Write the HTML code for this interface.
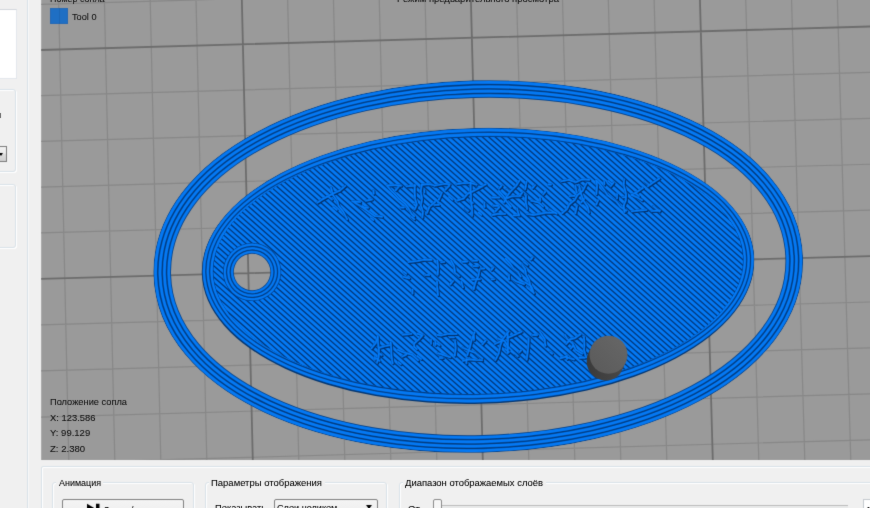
<!DOCTYPE html><html><head><meta charset="utf-8"><title>Preview</title><style>
html,body{margin:0;padding:0}
body{width:870px;height:508px;overflow:hidden;background:#f0f0f0;position:relative;font-family:"Liberation Sans",sans-serif;font-size:9.4px;color:#111}
.t{position:absolute;white-space:nowrap;line-height:1;}
.gb{position:absolute;border:1px solid #d9e2e8;border-radius:3px;box-shadow:inset 1px 1px 0 #fff, 1px 1px 0 #fff;box-sizing:border-box}
.s{display:inline-block;font-size:20px;-webkit-text-stroke:0.15px currentColor;line-height:normal;transform-origin:0 0;white-space:nowrap}
.lbl{position:absolute;background:#f0f0f0;white-space:nowrap;line-height:1;padding:0 2px}
</style></head><body>
<svg width="0" height="0" style="position:absolute"><defs><filter id="soft" x="0" y="0" width="100%" height="100%" filterUnits="objectBoundingBox" color-interpolation-filters="sRGB"><feConvolveMatrix order="3" kernelMatrix="0.1 0.55 0.1 0.55 4 0.55 0.1 0.55 0.1" edgeMode="duplicate" preserveAlpha="true"/></filter><filter id="soft2" x="0" y="0" width="100%" height="100%" filterUnits="objectBoundingBox" color-interpolation-filters="sRGB"><feConvolveMatrix order="3" kernelMatrix="0.03 0.3 0.03 0.3 4 0.3 0.03 0.3 0.03" edgeMode="duplicate" preserveAlpha="false"/></filter></defs></svg>
<div id="page" style="position:absolute;left:0;top:0;width:870px;height:508px;overflow:hidden;background:#f0f0f0;filter:url(#soft)">
<svg width="870" height="508" viewBox="0 0 870 508" style="position:absolute;left:0;top:0">
<defs>
<clipPath id="vp"><rect x="41.2" y="0" width="828.8" height="460.0"/></clipPath>
<clipPath id="inner"><ellipse cx="478.20" cy="265.45" rx="264.80" ry="128.30"/></clipPath>
<mask id="skirt" maskUnits="userSpaceOnUse" x="0" y="0" width="870" height="508">
<ellipse cx="478.20" cy="265.45" rx="276.20" ry="137.50" fill="none" stroke="#fff" stroke-width="97.40" />
<ellipse cx="478.20" cy="265.45" rx="276.20" ry="137.50" fill="#000" stroke="#000" stroke-width="62.20"/>
</mask>
<mask id="side" maskUnits="userSpaceOnUse" x="0" y="0" width="870" height="508"><rect width="870" height="508" fill="#fff"/><circle cx="252.00" cy="266.05" r="19.30" fill="#000"/></mask>
<mask id="body" maskUnits="userSpaceOnUse" x="0" y="0" width="870" height="508">
<ellipse cx="478.20" cy="265.45" rx="276.20" ry="137.50" fill="#fff"/>
<circle cx="252.00" cy="266.05" r="18.30" fill="#000"/>
</mask>
</defs>
<rect x="41.2" y="0" width="828.8" height="460.0" fill="#9a9a9a"/>
<g clip-path="url(#vp)">
<path d="M58.60 0L68.80 460.00M104.41 0L114.80 460.00M150.22 0L160.80 460.00M196.03 0L206.80 460.00M287.65 0L298.80 460.00M333.46 0L344.80 460.00M379.27 0L390.80 460.00M425.08 0L436.80 460.00M516.70 0L528.80 460.00M562.51 0L574.80 460.00M608.32 0L620.80 460.00M654.13 0L666.80 460.00M745.75 0L758.80 460.00M791.56 0L804.80 460.00M837.37 0L850.80 460.00M883.18 0L896.80 460.00M41.00 -41.06 L870 -65.34M41.00 4.43 L870 -19.42M41.00 95.63 L870 72.42M41.00 141.34 L870 118.34M41.00 187.12 L870 164.26M41.00 232.96 L870 210.18M41.00 324.86 L870 302.02M41.00 370.91 L870 347.94M41.00 417.04 L870 393.86M41.00 463.24 L870 439.78" stroke="#878787" stroke-width="1.2" fill="none"/>
<path d="M12.79 0L22.80 460.00M241.84 0L252.80 460.00M470.89 0L482.80 460.00M699.94 0L712.80 460.00M41.00 50.00 L870 26.50M41.00 278.88 L870 256.10M41.00 509.50 L870 485.70" stroke="#6c6c6c" stroke-width="1.8" fill="none"/>
<g transform="rotate(-1.50 478.20 265.45)">
<g mask="url(#skirt)" transform="translate(0 1.05)">
<ellipse cx="478.20" cy="265.45" rx="276.20" ry="137.50" fill="none" stroke="#033a7c" stroke-width="97.40" />
<ellipse cx="478.20" cy="265.45" rx="276.20" ry="137.50" fill="none" stroke="#0455b0" stroke-width="96.50" />
<ellipse cx="478.20" cy="265.45" rx="276.20" ry="137.50" fill="none" stroke="#0479f4" stroke-width="95.60" />
<ellipse cx="478.20" cy="265.45" rx="276.20" ry="137.50" fill="none" stroke="#0455b0" stroke-width="90.40" />
<ellipse cx="478.20" cy="265.45" rx="276.20" ry="137.50" fill="none" stroke="#033a7c" stroke-width="89.50" />
<ellipse cx="478.20" cy="265.45" rx="276.20" ry="137.50" fill="none" stroke="#033a7c" stroke-width="88.60" />
<ellipse cx="478.20" cy="265.45" rx="276.20" ry="137.50" fill="none" stroke="#0455b0" stroke-width="87.70" />
<ellipse cx="478.20" cy="265.45" rx="276.20" ry="137.50" fill="none" stroke="#0479f4" stroke-width="86.80" />
<ellipse cx="478.20" cy="265.45" rx="276.20" ry="137.50" fill="none" stroke="#0455b0" stroke-width="81.60" />
<ellipse cx="478.20" cy="265.45" rx="276.20" ry="137.50" fill="none" stroke="#033a7c" stroke-width="80.70" />
<ellipse cx="478.20" cy="265.45" rx="276.20" ry="137.50" fill="none" stroke="#033a7c" stroke-width="79.80" />
<ellipse cx="478.20" cy="265.45" rx="276.20" ry="137.50" fill="none" stroke="#0455b0" stroke-width="78.90" />
<ellipse cx="478.20" cy="265.45" rx="276.20" ry="137.50" fill="none" stroke="#0479f4" stroke-width="78.00" />
<ellipse cx="478.20" cy="265.45" rx="276.20" ry="137.50" fill="none" stroke="#0455b0" stroke-width="72.80" />
<ellipse cx="478.20" cy="265.45" rx="276.20" ry="137.50" fill="none" stroke="#033a7c" stroke-width="71.90" />
<ellipse cx="478.20" cy="265.45" rx="276.20" ry="137.50" fill="none" stroke="#033a7c" stroke-width="71.00" />
<ellipse cx="478.20" cy="265.45" rx="276.20" ry="137.50" fill="none" stroke="#0455b0" stroke-width="70.10" />
<ellipse cx="478.20" cy="265.45" rx="276.20" ry="137.50" fill="none" stroke="#0479f4" stroke-width="69.20" />
<ellipse cx="478.20" cy="265.45" rx="276.20" ry="137.50" fill="none" stroke="#0455b0" stroke-width="64.00" />
<ellipse cx="478.20" cy="265.45" rx="276.20" ry="137.50" fill="none" stroke="#033a7c" stroke-width="63.10" />
</g>
<g mask="url(#side)"><ellipse cx="477.90" cy="266.35" rx="276.20" ry="137.50" fill="#03356f"/></g>
<g mask="url(#body)">
<ellipse cx="478.20" cy="265.45" rx="276.20" ry="137.50" fill="#033c80"/>
<ellipse cx="478.20" cy="265.45" rx="275.75" ry="137.05" fill="#0560c6"/>
<ellipse cx="478.20" cy="265.45" rx="275.30" ry="136.60" fill="#0479f4"/>
<ellipse cx="478.20" cy="265.45" rx="273.30" ry="134.00" fill="#0560c6"/>
<ellipse cx="478.20" cy="265.45" rx="272.85" ry="133.55" fill="#033c80"/>
<ellipse cx="478.20" cy="265.45" rx="272.40" ry="133.10" fill="#033c80"/>
<ellipse cx="478.20" cy="265.45" rx="271.95" ry="132.65" fill="#0560c6"/>
<ellipse cx="478.20" cy="265.45" rx="271.50" ry="132.20" fill="#0479f4"/>
<ellipse cx="478.20" cy="265.45" rx="269.50" ry="129.60" fill="#0560c6"/>
<ellipse cx="478.20" cy="265.45" rx="269.05" ry="129.15" fill="#033c80"/>
<ellipse cx="478.20" cy="265.45" rx="268.60" ry="128.70" fill="#033c80"/>
<ellipse cx="478.20" cy="265.45" rx="268.15" ry="128.25" fill="#0560c6"/>
<ellipse cx="478.20" cy="265.45" rx="267.70" ry="127.80" fill="#0479f4"/>
<ellipse cx="478.20" cy="265.45" rx="265.70" ry="125.20" fill="#0560c6"/>
<ellipse cx="478.20" cy="265.45" rx="265.25" ry="124.75" fill="#033c80"/>
<g clip-path="url(#inner)">
<ellipse cx="478.20" cy="265.45" rx="276.20" ry="137.50" fill="#02306a"/>
<path d="M451.91 -191.04 L935.39 258.24M449.04 -187.95 L932.51 261.33M446.16 -184.86 L929.64 264.42M443.29 -181.76 L926.77 267.51M440.42 -178.67 L923.90 270.60M437.55 -175.58 L921.02 273.69M434.67 -172.49 L918.15 276.79M431.80 -169.40 L915.28 279.88M428.93 -166.31 L912.41 282.97M426.06 -163.22 L909.53 286.06M423.18 -160.12 L906.66 289.15M420.31 -157.03 L903.79 292.24M417.44 -153.94 L900.92 295.33M414.56 -150.85 L898.04 298.43M411.69 -147.76 L895.17 301.52M408.82 -144.67 L892.30 304.61M405.95 -141.58 L889.43 307.70M403.07 -138.49 L886.55 310.79M400.20 -135.39 L883.68 313.88M397.33 -132.30 L880.81 316.97M394.46 -129.21 L877.93 320.06M391.58 -126.12 L875.06 323.16M388.71 -123.03 L872.19 326.25M385.84 -119.94 L869.32 329.34M382.97 -116.85 L866.44 332.43M380.09 -113.75 L863.57 335.52M377.22 -110.66 L860.70 338.61M374.35 -107.57 L857.83 341.70M371.48 -104.48 L854.95 344.80M368.60 -101.39 L852.08 347.89M365.73 -98.30 L849.21 350.98M362.86 -95.21 L846.34 354.07M359.98 -92.12 L843.46 357.16M357.11 -89.02 L840.59 360.25M354.24 -85.93 L837.72 363.34M351.37 -82.84 L834.84 366.43M348.49 -79.75 L831.97 369.53M345.62 -76.66 L829.10 372.62M342.75 -73.57 L826.23 375.71M339.88 -70.48 L823.35 378.80M337.00 -67.38 L820.48 381.89M334.13 -64.29 L817.61 384.98M331.26 -61.20 L814.74 388.07M328.39 -58.11 L811.86 391.17M325.51 -55.02 L808.99 394.26M322.64 -51.93 L806.12 397.35M319.77 -48.84 L803.25 400.44M316.89 -45.75 L800.37 403.53M314.02 -42.65 L797.50 406.62M311.15 -39.56 L794.63 409.71M308.28 -36.47 L791.76 412.80M305.40 -33.38 L788.88 415.90M302.53 -30.29 L786.01 418.99M299.66 -27.20 L783.14 422.08M296.79 -24.11 L780.26 425.17M293.91 -21.01 L777.39 428.26M291.04 -17.92 L774.52 431.35M288.17 -14.83 L771.65 434.44M285.30 -11.74 L768.77 437.54M282.42 -8.65 L765.90 440.63M279.55 -5.56 L763.03 443.72M276.68 -2.47 L760.16 446.81M273.81 0.62 L757.28 449.90M270.93 3.72 L754.41 452.99M268.06 6.81 L751.54 456.08M265.19 9.90 L748.67 459.17M262.31 12.99 L745.79 462.27M259.44 16.08 L742.92 465.36M256.57 19.17 L740.05 468.45M253.70 22.26 L737.18 471.54M250.82 25.36 L734.30 474.63M247.95 28.45 L731.43 477.72M245.08 31.54 L728.56 480.81M242.21 34.63 L725.68 483.91M239.33 37.72 L722.81 487.00M236.46 40.81 L719.94 490.09M233.59 43.90 L717.07 493.18M230.72 46.99 L714.19 496.27M227.84 50.09 L711.32 499.36M224.97 53.18 L708.45 502.45M222.10 56.27 L705.58 505.54M219.22 59.36 L702.70 508.64M216.35 62.45 L699.83 511.73M213.48 65.54 L696.96 514.82M210.61 68.63 L694.09 517.91M207.73 71.73 L691.21 521.00M204.86 74.82 L688.34 524.09M201.99 77.91 L685.47 527.18M199.12 81.00 L682.59 530.28M196.24 84.09 L679.72 533.37M193.37 87.18 L676.85 536.46M190.50 90.27 L673.98 539.55M187.63 93.36 L671.10 542.64M184.75 96.46 L668.23 545.73M181.88 99.55 L665.36 548.82M179.01 102.64 L662.49 551.91M176.14 105.73 L659.61 555.01M173.26 108.82 L656.74 558.10M170.39 111.91 L653.87 561.19M167.52 115.00 L651.00 564.28M164.64 118.10 L648.12 567.37M161.77 121.19 L645.25 570.46M158.90 124.28 L642.38 573.55M156.03 127.37 L639.51 576.65M153.15 130.46 L636.63 579.74M150.28 133.55 L633.76 582.83M147.41 136.64 L630.89 585.92M144.54 139.73 L628.01 589.01M141.66 142.83 L625.14 592.10M138.79 145.92 L622.27 595.19M135.92 149.01 L619.40 598.28M133.05 152.10 L616.52 601.38M130.17 155.19 L613.65 604.47M127.30 158.28 L610.78 607.56M124.43 161.37 L607.91 610.65M121.56 164.47 L605.03 613.74M118.68 167.56 L602.16 616.83M115.81 170.65 L599.29 619.92M112.94 173.74 L596.42 623.02M110.06 176.83 L593.54 626.11M107.19 179.92 L590.67 629.20M104.32 183.01 L587.80 632.29M101.45 186.10 L584.92 635.38M98.57 189.20 L582.05 638.47M95.70 192.29 L579.18 641.56M92.83 195.38 L576.31 644.65M89.96 198.47 L573.43 647.75M87.08 201.56 L570.56 650.84M84.21 204.65 L567.69 653.93M81.34 207.74 L564.82 657.02M78.47 210.84 L561.94 660.11M75.59 213.93 L559.07 663.20M72.72 217.02 L556.20 666.29M69.85 220.11 L553.33 669.39M66.97 223.20 L550.45 672.48M64.10 226.29 L547.58 675.57M61.23 229.38 L544.71 678.66M58.36 232.47 L541.84 681.75M55.48 235.57 L538.96 684.84M52.61 238.66 L536.09 687.93M49.74 241.75 L533.22 691.02M46.87 244.84 L530.34 694.12M43.99 247.93 L527.47 697.21M41.12 251.02 L524.60 700.30M38.25 254.11 L521.73 703.39M35.38 257.21 L518.85 706.48M32.50 260.30 L515.98 709.57M29.63 263.39 L513.11 712.66M26.76 266.48 L510.24 715.76M23.89 269.57 L507.36 718.85M21.01 272.66 L504.49 721.94" stroke="#0458b8" stroke-width="3.4" fill="none"/>
<path d="M451.91 -191.04 L935.39 258.24M449.04 -187.95 L932.51 261.33M446.16 -184.86 L929.64 264.42M443.29 -181.76 L926.77 267.51M440.42 -178.67 L923.90 270.60M437.55 -175.58 L921.02 273.69M434.67 -172.49 L918.15 276.79M431.80 -169.40 L915.28 279.88M428.93 -166.31 L912.41 282.97M426.06 -163.22 L909.53 286.06M423.18 -160.12 L906.66 289.15M420.31 -157.03 L903.79 292.24M417.44 -153.94 L900.92 295.33M414.56 -150.85 L898.04 298.43M411.69 -147.76 L895.17 301.52M408.82 -144.67 L892.30 304.61M405.95 -141.58 L889.43 307.70M403.07 -138.49 L886.55 310.79M400.20 -135.39 L883.68 313.88M397.33 -132.30 L880.81 316.97M394.46 -129.21 L877.93 320.06M391.58 -126.12 L875.06 323.16M388.71 -123.03 L872.19 326.25M385.84 -119.94 L869.32 329.34M382.97 -116.85 L866.44 332.43M380.09 -113.75 L863.57 335.52M377.22 -110.66 L860.70 338.61M374.35 -107.57 L857.83 341.70M371.48 -104.48 L854.95 344.80M368.60 -101.39 L852.08 347.89M365.73 -98.30 L849.21 350.98M362.86 -95.21 L846.34 354.07M359.98 -92.12 L843.46 357.16M357.11 -89.02 L840.59 360.25M354.24 -85.93 L837.72 363.34M351.37 -82.84 L834.84 366.43M348.49 -79.75 L831.97 369.53M345.62 -76.66 L829.10 372.62M342.75 -73.57 L826.23 375.71M339.88 -70.48 L823.35 378.80M337.00 -67.38 L820.48 381.89M334.13 -64.29 L817.61 384.98M331.26 -61.20 L814.74 388.07M328.39 -58.11 L811.86 391.17M325.51 -55.02 L808.99 394.26M322.64 -51.93 L806.12 397.35M319.77 -48.84 L803.25 400.44M316.89 -45.75 L800.37 403.53M314.02 -42.65 L797.50 406.62M311.15 -39.56 L794.63 409.71M308.28 -36.47 L791.76 412.80M305.40 -33.38 L788.88 415.90M302.53 -30.29 L786.01 418.99M299.66 -27.20 L783.14 422.08M296.79 -24.11 L780.26 425.17M293.91 -21.01 L777.39 428.26M291.04 -17.92 L774.52 431.35M288.17 -14.83 L771.65 434.44M285.30 -11.74 L768.77 437.54M282.42 -8.65 L765.90 440.63M279.55 -5.56 L763.03 443.72M276.68 -2.47 L760.16 446.81M273.81 0.62 L757.28 449.90M270.93 3.72 L754.41 452.99M268.06 6.81 L751.54 456.08M265.19 9.90 L748.67 459.17M262.31 12.99 L745.79 462.27M259.44 16.08 L742.92 465.36M256.57 19.17 L740.05 468.45M253.70 22.26 L737.18 471.54M250.82 25.36 L734.30 474.63M247.95 28.45 L731.43 477.72M245.08 31.54 L728.56 480.81M242.21 34.63 L725.68 483.91M239.33 37.72 L722.81 487.00M236.46 40.81 L719.94 490.09M233.59 43.90 L717.07 493.18M230.72 46.99 L714.19 496.27M227.84 50.09 L711.32 499.36M224.97 53.18 L708.45 502.45M222.10 56.27 L705.58 505.54M219.22 59.36 L702.70 508.64M216.35 62.45 L699.83 511.73M213.48 65.54 L696.96 514.82M210.61 68.63 L694.09 517.91M207.73 71.73 L691.21 521.00M204.86 74.82 L688.34 524.09M201.99 77.91 L685.47 527.18M199.12 81.00 L682.59 530.28M196.24 84.09 L679.72 533.37M193.37 87.18 L676.85 536.46M190.50 90.27 L673.98 539.55M187.63 93.36 L671.10 542.64M184.75 96.46 L668.23 545.73M181.88 99.55 L665.36 548.82M179.01 102.64 L662.49 551.91M176.14 105.73 L659.61 555.01M173.26 108.82 L656.74 558.10M170.39 111.91 L653.87 561.19M167.52 115.00 L651.00 564.28M164.64 118.10 L648.12 567.37M161.77 121.19 L645.25 570.46M158.90 124.28 L642.38 573.55M156.03 127.37 L639.51 576.65M153.15 130.46 L636.63 579.74M150.28 133.55 L633.76 582.83M147.41 136.64 L630.89 585.92M144.54 139.73 L628.01 589.01M141.66 142.83 L625.14 592.10M138.79 145.92 L622.27 595.19M135.92 149.01 L619.40 598.28M133.05 152.10 L616.52 601.38M130.17 155.19 L613.65 604.47M127.30 158.28 L610.78 607.56M124.43 161.37 L607.91 610.65M121.56 164.47 L605.03 613.74M118.68 167.56 L602.16 616.83M115.81 170.65 L599.29 619.92M112.94 173.74 L596.42 623.02M110.06 176.83 L593.54 626.11M107.19 179.92 L590.67 629.20M104.32 183.01 L587.80 632.29M101.45 186.10 L584.92 635.38M98.57 189.20 L582.05 638.47M95.70 192.29 L579.18 641.56M92.83 195.38 L576.31 644.65M89.96 198.47 L573.43 647.75M87.08 201.56 L570.56 650.84M84.21 204.65 L567.69 653.93M81.34 207.74 L564.82 657.02M78.47 210.84 L561.94 660.11M75.59 213.93 L559.07 663.20M72.72 217.02 L556.20 666.29M69.85 220.11 L553.33 669.39M66.97 223.20 L550.45 672.48M64.10 226.29 L547.58 675.57M61.23 229.38 L544.71 678.66M58.36 232.47 L541.84 681.75M55.48 235.57 L538.96 684.84M52.61 238.66 L536.09 687.93M49.74 241.75 L533.22 691.02M46.87 244.84 L530.34 694.12M43.99 247.93 L527.47 697.21M41.12 251.02 L524.60 700.30M38.25 254.11 L521.73 703.39M35.38 257.21 L518.85 706.48M32.50 260.30 L515.98 709.57M29.63 263.39 L513.11 712.66M26.76 266.48 L510.24 715.76M23.89 269.57 L507.36 718.85M21.01 272.66 L504.49 721.94" stroke="#0479f4" stroke-width="2.55" fill="none"/>
<path d="M333.1 183.4 L334.6 190.8M334.6 190.8 L339.0 197.5M339.0 197.5 L340.3 202.4M340.3 202.4 L344.5 207.7M344.5 207.7 L348.4 215.8M319.2 198.4 L323.5 195.7M323.5 195.7 L329.5 192.6M329.5 192.6 L335.7 189.5M335.7 189.5 L341.7 187.0M341.7 187.0 L347.3 182.5M334.9 203.3 L338.2 206.0M331.1 193.5 L333.7 195.7M354.1 197.9 L358.4 200.8M358.4 200.8 L364.8 204.8M364.8 204.8 L369.6 208.5M369.6 208.5 L375.9 213.2M375.9 213.2 L383.4 214.2M354.1 197.9 L361.9 198.9M367.6 197.9 L373.7 196.7M372.2 215.2 L374.6 217.3M364.9 204.8 L369.7 204.8M364.0 203.0 L366.0 204.7M375.5 187.6 L375.5 191.1M416.9 183.4 L416.6 189.2M416.6 189.2 L416.7 196.4M416.7 196.4 L418.4 203.2M418.4 203.2 L416.1 207.8M389.0 183.4 L395.0 182.8M395.0 182.8 L403.1 183.8M408.8 184.5 L417.4 184.2M389.0 183.4 L394.1 189.4M394.1 189.4 L397.1 192.3M397.1 192.3 L400.9 196.9M400.9 196.9 L406.4 201.6M406.4 201.6 L409.2 205.1M409.2 205.1 L413.0 212.2M413.0 212.2 L415.6 214.6M415.7 202.7 L417.8 204.5M412.7 215.2 L415.5 217.6M397.7 188.1 L400.6 184.8M402.4 205.6 L405.4 205.6M423.9 183.4 L431.6 182.8M431.6 182.8 L436.6 184.5M436.6 184.5 L446.0 183.0M446.0 183.0 L451.9 183.5M428.2 211.7 L431.0 205.5M431.0 205.5 L436.8 200.8M440.5 198.6 L443.7 191.7M447.3 188.9 L451.3 184.9M423.9 183.4 L422.7 189.8M422.7 189.8 L423.8 197.7M423.8 197.7 L422.4 203.9M422.4 203.9 L424.3 210.1M424.3 210.1 L423.6 216.1M436.0 203.8 L440.5 203.8M451.0 196.1 L454.3 198.9M426.3 188.5 L426.3 191.1M458.8 200.0 L465.4 198.1M465.4 198.1 L469.5 193.5M469.5 193.5 L474.1 191.5M474.1 191.5 L481.2 188.1M481.2 188.1 L487.8 184.4M458.8 183.4 L465.0 182.8M465.0 182.8 L473.0 182.7M473.0 182.7 L478.6 184.7M472.7 183.4 L472.5 191.1M472.5 191.1 L472.8 196.3M472.8 196.3 L472.6 201.7M472.6 201.7 L473.6 208.1M473.6 208.1 L473.4 215.6M480.7 186.8 L483.8 186.8M466.5 208.2 L469.5 210.7M480.0 212.6 L482.5 214.8M486.0 202.8 L486.0 207.1M471.4 200.5 L474.3 202.9M493.7 215.4 L499.6 214.3M499.6 214.3 L506.4 214.7M515.1 216.3 L520.6 216.1M496.6 212.0 L500.8 207.7M505.6 203.2 L508.6 197.0M508.6 197.0 L513.1 191.7M513.1 191.7 L518.3 186.6M518.3 186.6 L521.4 182.0M493.7 197.9 L501.0 198.0M509.1 198.8 L513.4 197.2M513.4 197.2 L522.4 197.2M500.9 191.5 L505.9 197.8M505.9 197.8 L508.3 202.3M508.3 202.3 L512.3 207.6M518.5 209.6 L520.3 216.5M521.4 196.8 L524.2 193.8M494.9 206.2 L499.8 206.2M501.0 189.2 L503.7 186.2M508.5 190.0 L511.4 192.4M528.6 183.4 L527.1 190.5M527.7 196.2 L527.4 203.6M527.4 203.6 L528.6 210.1M528.6 215.4 L535.1 216.4M535.1 216.4 L543.0 215.2M543.0 215.2 L548.2 214.3M548.2 214.3 L557.2 214.7M532.9 202.1 L540.3 204.0M540.3 204.0 L544.7 208.2M550.8 211.2 L557.9 215.6M534.7 189.3 L537.0 186.7M541.8 199.5 L541.8 202.7M550.3 186.4 L553.1 186.4M545.0 196.1 L547.2 193.6M563.5 215.4 L568.3 211.5M568.3 211.5 L570.8 206.7M570.8 206.7 L576.4 202.4M576.4 202.4 L579.2 197.8M579.2 197.8 L584.7 193.4M584.7 193.4 L588.4 186.6M563.5 183.4 L570.9 182.2M570.9 182.2 L577.9 184.8M577.9 184.8 L584.3 182.1M584.3 182.1 L591.5 182.7M577.3 188.6 L578.6 195.0M578.5 208.3 L576.6 215.9M581.3 188.6 L582.4 194.9M582.4 194.9 L584.9 202.9M584.9 202.9 L589.1 209.6M589.1 209.6 L590.3 215.4M582.8 205.1 L585.7 201.9M571.5 198.4 L576.4 198.4M626.3 183.4 L625.7 188.6M625.7 188.6 L627.8 197.7M627.8 197.7 L627.5 203.9M627.5 203.9 L625.1 209.8M625.1 209.8 L625.9 215.8M598.4 183.4 L601.7 186.9M601.7 186.9 L606.4 193.7M606.4 193.7 L609.3 198.5M609.3 198.5 L614.1 202.4M614.1 202.4 L618.0 205.2M618.0 205.2 L621.8 210.4M621.8 210.4 L627.6 214.5M598.4 183.4 L599.1 189.1M599.1 189.1 L598.1 197.4M599.7 203.4 L597.7 207.7M612.7 189.5 L615.6 186.2M610.3 184.4 L614.0 187.5M624.6 201.0 L627.3 201.0M618.8 197.9 L618.8 202.0M606.4 185.0 L606.4 187.9M633.3 215.4 L640.0 214.7M640.0 214.7 L647.8 214.3M653.0 215.5 L661.4 215.3M633.3 198.9 L639.7 202.0M639.7 202.0 L643.7 204.6M654.7 210.7 L660.8 216.2M633.3 198.9 L638.2 196.6M638.2 196.6 L644.7 192.3M650.1 190.5 L654.4 187.7M654.4 187.7 L661.6 183.2M636.9 197.1 L640.6 200.2M647.0 185.8 L650.7 189.0M403.2 274.9 L409.0 276.4M424.8 273.7 L429.0 273.8M408.6 260.1 L417.2 259.5M417.2 259.5 L424.4 258.2M424.4 258.2 L431.8 258.5M403.5 269.7 L405.9 271.8M411.8 288.0 L411.8 291.7M437.4 259.4 L438.1 265.7M438.1 265.7 L437.4 273.6M436.7 280.4 L436.6 285.3M436.6 285.3 L437.2 294.0M451.1 259.4 L454.2 265.8M454.2 265.8 L454.7 272.2M454.7 272.2 L458.8 275.6M460.9 281.5 L462.4 286.8M462.6 261.3 L467.5 261.3M441.3 261.2 L444.3 261.2M449.7 283.7 L452.6 280.4M473.0 289.1 L474.8 282.6M474.8 282.6 L478.1 275.9M478.1 275.9 L479.3 270.1M471.7 279.4 L479.5 279.2M472.8 260.6 L477.3 260.6M473.4 266.1 L478.1 266.1M480.9 268.7 L484.1 268.7M491.2 270.2 L493.4 267.8M491.4 279.7 L493.9 279.7M512.3 279.8 L515.7 282.3M515.7 282.3 L523.6 285.4M526.7 288.9 L533.1 294.3M505.9 259.4 L509.9 264.0M509.9 264.0 L513.5 269.6M513.5 269.6 L517.8 273.0M517.8 273.0 L520.3 277.6M524.5 283.5 L530.7 287.6M530.7 287.6 L533.1 294.6M522.0 265.9 L525.0 270.2M525.0 270.2 L525.7 275.7M525.7 275.7 L528.5 281.2M528.5 281.2 L530.3 289.0M530.3 289.0 L531.9 292.7M523.7 262.9 L527.5 266.1M508.7 275.6 L508.7 280.2M530.9 260.8 L532.9 258.5M375.9 333.4 L376.0 339.2M376.0 339.2 L376.7 347.4M376.7 347.4 L376.3 354.3M376.3 354.3 L374.5 360.0M377.2 345.2 L382.0 343.9M382.0 343.9 L387.4 342.8M388.6 339.9 L389.1 345.9M389.1 345.9 L389.1 353.4M389.1 353.4 L390.1 361.0M369.3 345.5 L373.6 340.6M373.6 340.6 L375.6 334.8M374.0 355.6 L377.0 358.1M372.5 354.3 L372.5 356.9M377.2 350.7 L379.3 352.5M395.6 347.7 L400.9 350.2M400.9 350.2 L409.6 352.9M409.6 352.9 L415.6 358.7M399.8 354.6 L403.8 352.7M411.7 342.2 L417.8 337.0M417.8 337.0 L420.8 333.5M400.9 332.7 L409.5 332.1M415.5 332.1 L419.9 333.7M412.1 341.8 L412.1 345.3M412.4 345.5 L414.6 347.4M395.7 360.1 L398.1 362.1M415.0 354.5 L418.6 357.5M453.1 339.8 L453.5 347.4M453.5 347.4 L452.4 355.0M435.6 352.2 L439.3 353.3M439.3 353.3 L447.7 356.4M435.3 334.0 L439.9 334.4M439.9 334.4 L446.4 332.9M446.4 332.9 L454.7 333.3M433.4 340.5 L433.4 343.8M429.0 338.4 L429.0 342.5M435.1 342.3 L437.4 344.2M448.0 336.6 L452.1 336.6M437.2 357.0 L440.3 357.0M460.5 347.2 L466.5 350.1M466.5 350.1 L472.7 352.6M472.7 352.6 L479.9 358.5M464.8 355.0 L467.5 347.7M467.5 347.7 L469.4 340.6M469.4 340.6 L472.8 332.1M460.5 360.4 L467.2 359.1M467.2 359.1 L473.4 359.9M473.4 359.9 L479.7 360.2M463.9 358.7 L463.9 363.0M472.0 335.2 L472.0 339.8M480.4 344.3 L483.7 340.6M492.9 360.4 L496.4 353.8M496.4 353.8 L498.3 345.5M498.3 345.5 L501.0 339.3M501.0 339.3 L506.9 332.3M505.6 333.4 L506.1 339.3M506.1 339.3 L505.7 347.4M505.7 347.4 L505.4 354.0M492.9 344.3 L499.9 341.5M505.3 338.7 L510.7 336.6M510.7 336.6 L519.8 332.7M496.0 339.1 L502.7 341.7M502.7 341.7 L506.0 347.5M506.0 347.5 L511.1 352.9M511.1 352.9 L515.4 357.1M516.9 353.6 L518.9 351.4M502.8 349.7 L506.5 352.7M509.0 352.2 L511.8 354.5M526.7 339.4 L526.2 346.6M526.2 346.6 L525.5 352.7M525.5 352.7 L524.2 360.8M538.1 333.4 L542.7 340.8M542.7 340.8 L543.3 347.4M547.7 353.9 L549.8 355.6M530.6 336.5 L535.4 336.5M582.0 339.0 L582.3 346.4M582.3 346.4 L581.8 353.0M581.8 353.0 L583.8 360.1M564.2 346.2 L568.3 341.6M568.3 341.6 L572.8 340.7M572.8 340.7 L578.7 336.8M557.8 360.4 L563.1 359.0M563.1 359.0 L571.3 361.9M576.8 360.4 L582.3 360.4M563.0 337.2 L565.6 341.6M565.6 341.6 L570.5 345.8M570.5 345.8 L573.5 352.3M573.5 352.3 L579.8 356.3M568.5 350.9 L570.5 348.6M564.5 357.8 L564.5 361.2" stroke="#02306a" stroke-width="2.2" fill="none" stroke-linecap="round" transform="translate(0.9 1.0)"/>
<path d="M333.1 183.4 L334.6 190.8M334.6 190.8 L339.0 197.5M339.0 197.5 L340.3 202.4M340.3 202.4 L344.5 207.7M344.5 207.7 L348.4 215.8M319.2 198.4 L323.5 195.7M323.5 195.7 L329.5 192.6M329.5 192.6 L335.7 189.5M335.7 189.5 L341.7 187.0M341.7 187.0 L347.3 182.5M334.9 203.3 L338.2 206.0M331.1 193.5 L333.7 195.7M354.1 197.9 L358.4 200.8M358.4 200.8 L364.8 204.8M364.8 204.8 L369.6 208.5M369.6 208.5 L375.9 213.2M375.9 213.2 L383.4 214.2M354.1 197.9 L361.9 198.9M367.6 197.9 L373.7 196.7M372.2 215.2 L374.6 217.3M364.9 204.8 L369.7 204.8M364.0 203.0 L366.0 204.7M375.5 187.6 L375.5 191.1M416.9 183.4 L416.6 189.2M416.6 189.2 L416.7 196.4M416.7 196.4 L418.4 203.2M418.4 203.2 L416.1 207.8M389.0 183.4 L395.0 182.8M395.0 182.8 L403.1 183.8M408.8 184.5 L417.4 184.2M389.0 183.4 L394.1 189.4M394.1 189.4 L397.1 192.3M397.1 192.3 L400.9 196.9M400.9 196.9 L406.4 201.6M406.4 201.6 L409.2 205.1M409.2 205.1 L413.0 212.2M413.0 212.2 L415.6 214.6M415.7 202.7 L417.8 204.5M412.7 215.2 L415.5 217.6M397.7 188.1 L400.6 184.8M402.4 205.6 L405.4 205.6M423.9 183.4 L431.6 182.8M431.6 182.8 L436.6 184.5M436.6 184.5 L446.0 183.0M446.0 183.0 L451.9 183.5M428.2 211.7 L431.0 205.5M431.0 205.5 L436.8 200.8M440.5 198.6 L443.7 191.7M447.3 188.9 L451.3 184.9M423.9 183.4 L422.7 189.8M422.7 189.8 L423.8 197.7M423.8 197.7 L422.4 203.9M422.4 203.9 L424.3 210.1M424.3 210.1 L423.6 216.1M436.0 203.8 L440.5 203.8M451.0 196.1 L454.3 198.9M426.3 188.5 L426.3 191.1M458.8 200.0 L465.4 198.1M465.4 198.1 L469.5 193.5M469.5 193.5 L474.1 191.5M474.1 191.5 L481.2 188.1M481.2 188.1 L487.8 184.4M458.8 183.4 L465.0 182.8M465.0 182.8 L473.0 182.7M473.0 182.7 L478.6 184.7M472.7 183.4 L472.5 191.1M472.5 191.1 L472.8 196.3M472.8 196.3 L472.6 201.7M472.6 201.7 L473.6 208.1M473.6 208.1 L473.4 215.6M480.7 186.8 L483.8 186.8M466.5 208.2 L469.5 210.7M480.0 212.6 L482.5 214.8M486.0 202.8 L486.0 207.1M471.4 200.5 L474.3 202.9M493.7 215.4 L499.6 214.3M499.6 214.3 L506.4 214.7M515.1 216.3 L520.6 216.1M496.6 212.0 L500.8 207.7M505.6 203.2 L508.6 197.0M508.6 197.0 L513.1 191.7M513.1 191.7 L518.3 186.6M518.3 186.6 L521.4 182.0M493.7 197.9 L501.0 198.0M509.1 198.8 L513.4 197.2M513.4 197.2 L522.4 197.2M500.9 191.5 L505.9 197.8M505.9 197.8 L508.3 202.3M508.3 202.3 L512.3 207.6M518.5 209.6 L520.3 216.5M521.4 196.8 L524.2 193.8M494.9 206.2 L499.8 206.2M501.0 189.2 L503.7 186.2M508.5 190.0 L511.4 192.4M528.6 183.4 L527.1 190.5M527.7 196.2 L527.4 203.6M527.4 203.6 L528.6 210.1M528.6 215.4 L535.1 216.4M535.1 216.4 L543.0 215.2M543.0 215.2 L548.2 214.3M548.2 214.3 L557.2 214.7M532.9 202.1 L540.3 204.0M540.3 204.0 L544.7 208.2M550.8 211.2 L557.9 215.6M534.7 189.3 L537.0 186.7M541.8 199.5 L541.8 202.7M550.3 186.4 L553.1 186.4M545.0 196.1 L547.2 193.6M563.5 215.4 L568.3 211.5M568.3 211.5 L570.8 206.7M570.8 206.7 L576.4 202.4M576.4 202.4 L579.2 197.8M579.2 197.8 L584.7 193.4M584.7 193.4 L588.4 186.6M563.5 183.4 L570.9 182.2M570.9 182.2 L577.9 184.8M577.9 184.8 L584.3 182.1M584.3 182.1 L591.5 182.7M577.3 188.6 L578.6 195.0M578.5 208.3 L576.6 215.9M581.3 188.6 L582.4 194.9M582.4 194.9 L584.9 202.9M584.9 202.9 L589.1 209.6M589.1 209.6 L590.3 215.4M582.8 205.1 L585.7 201.9M571.5 198.4 L576.4 198.4M626.3 183.4 L625.7 188.6M625.7 188.6 L627.8 197.7M627.8 197.7 L627.5 203.9M627.5 203.9 L625.1 209.8M625.1 209.8 L625.9 215.8M598.4 183.4 L601.7 186.9M601.7 186.9 L606.4 193.7M606.4 193.7 L609.3 198.5M609.3 198.5 L614.1 202.4M614.1 202.4 L618.0 205.2M618.0 205.2 L621.8 210.4M621.8 210.4 L627.6 214.5M598.4 183.4 L599.1 189.1M599.1 189.1 L598.1 197.4M599.7 203.4 L597.7 207.7M612.7 189.5 L615.6 186.2M610.3 184.4 L614.0 187.5M624.6 201.0 L627.3 201.0M618.8 197.9 L618.8 202.0M606.4 185.0 L606.4 187.9M633.3 215.4 L640.0 214.7M640.0 214.7 L647.8 214.3M653.0 215.5 L661.4 215.3M633.3 198.9 L639.7 202.0M639.7 202.0 L643.7 204.6M654.7 210.7 L660.8 216.2M633.3 198.9 L638.2 196.6M638.2 196.6 L644.7 192.3M650.1 190.5 L654.4 187.7M654.4 187.7 L661.6 183.2M636.9 197.1 L640.6 200.2M647.0 185.8 L650.7 189.0M403.2 274.9 L409.0 276.4M424.8 273.7 L429.0 273.8M408.6 260.1 L417.2 259.5M417.2 259.5 L424.4 258.2M424.4 258.2 L431.8 258.5M403.5 269.7 L405.9 271.8M411.8 288.0 L411.8 291.7M437.4 259.4 L438.1 265.7M438.1 265.7 L437.4 273.6M436.7 280.4 L436.6 285.3M436.6 285.3 L437.2 294.0M451.1 259.4 L454.2 265.8M454.2 265.8 L454.7 272.2M454.7 272.2 L458.8 275.6M460.9 281.5 L462.4 286.8M462.6 261.3 L467.5 261.3M441.3 261.2 L444.3 261.2M449.7 283.7 L452.6 280.4M473.0 289.1 L474.8 282.6M474.8 282.6 L478.1 275.9M478.1 275.9 L479.3 270.1M471.7 279.4 L479.5 279.2M472.8 260.6 L477.3 260.6M473.4 266.1 L478.1 266.1M480.9 268.7 L484.1 268.7M491.2 270.2 L493.4 267.8M491.4 279.7 L493.9 279.7M512.3 279.8 L515.7 282.3M515.7 282.3 L523.6 285.4M526.7 288.9 L533.1 294.3M505.9 259.4 L509.9 264.0M509.9 264.0 L513.5 269.6M513.5 269.6 L517.8 273.0M517.8 273.0 L520.3 277.6M524.5 283.5 L530.7 287.6M530.7 287.6 L533.1 294.6M522.0 265.9 L525.0 270.2M525.0 270.2 L525.7 275.7M525.7 275.7 L528.5 281.2M528.5 281.2 L530.3 289.0M530.3 289.0 L531.9 292.7M523.7 262.9 L527.5 266.1M508.7 275.6 L508.7 280.2M530.9 260.8 L532.9 258.5M375.9 333.4 L376.0 339.2M376.0 339.2 L376.7 347.4M376.7 347.4 L376.3 354.3M376.3 354.3 L374.5 360.0M377.2 345.2 L382.0 343.9M382.0 343.9 L387.4 342.8M388.6 339.9 L389.1 345.9M389.1 345.9 L389.1 353.4M389.1 353.4 L390.1 361.0M369.3 345.5 L373.6 340.6M373.6 340.6 L375.6 334.8M374.0 355.6 L377.0 358.1M372.5 354.3 L372.5 356.9M377.2 350.7 L379.3 352.5M395.6 347.7 L400.9 350.2M400.9 350.2 L409.6 352.9M409.6 352.9 L415.6 358.7M399.8 354.6 L403.8 352.7M411.7 342.2 L417.8 337.0M417.8 337.0 L420.8 333.5M400.9 332.7 L409.5 332.1M415.5 332.1 L419.9 333.7M412.1 341.8 L412.1 345.3M412.4 345.5 L414.6 347.4M395.7 360.1 L398.1 362.1M415.0 354.5 L418.6 357.5M453.1 339.8 L453.5 347.4M453.5 347.4 L452.4 355.0M435.6 352.2 L439.3 353.3M439.3 353.3 L447.7 356.4M435.3 334.0 L439.9 334.4M439.9 334.4 L446.4 332.9M446.4 332.9 L454.7 333.3M433.4 340.5 L433.4 343.8M429.0 338.4 L429.0 342.5M435.1 342.3 L437.4 344.2M448.0 336.6 L452.1 336.6M437.2 357.0 L440.3 357.0M460.5 347.2 L466.5 350.1M466.5 350.1 L472.7 352.6M472.7 352.6 L479.9 358.5M464.8 355.0 L467.5 347.7M467.5 347.7 L469.4 340.6M469.4 340.6 L472.8 332.1M460.5 360.4 L467.2 359.1M467.2 359.1 L473.4 359.9M473.4 359.9 L479.7 360.2M463.9 358.7 L463.9 363.0M472.0 335.2 L472.0 339.8M480.4 344.3 L483.7 340.6M492.9 360.4 L496.4 353.8M496.4 353.8 L498.3 345.5M498.3 345.5 L501.0 339.3M501.0 339.3 L506.9 332.3M505.6 333.4 L506.1 339.3M506.1 339.3 L505.7 347.4M505.7 347.4 L505.4 354.0M492.9 344.3 L499.9 341.5M505.3 338.7 L510.7 336.6M510.7 336.6 L519.8 332.7M496.0 339.1 L502.7 341.7M502.7 341.7 L506.0 347.5M506.0 347.5 L511.1 352.9M511.1 352.9 L515.4 357.1M516.9 353.6 L518.9 351.4M502.8 349.7 L506.5 352.7M509.0 352.2 L511.8 354.5M526.7 339.4 L526.2 346.6M526.2 346.6 L525.5 352.7M525.5 352.7 L524.2 360.8M538.1 333.4 L542.7 340.8M542.7 340.8 L543.3 347.4M547.7 353.9 L549.8 355.6M530.6 336.5 L535.4 336.5M582.0 339.0 L582.3 346.4M582.3 346.4 L581.8 353.0M581.8 353.0 L583.8 360.1M564.2 346.2 L568.3 341.6M568.3 341.6 L572.8 340.7M572.8 340.7 L578.7 336.8M557.8 360.4 L563.1 359.0M563.1 359.0 L571.3 361.9M576.8 360.4 L582.3 360.4M563.0 337.2 L565.6 341.6M565.6 341.6 L570.5 345.8M570.5 345.8 L573.5 352.3M573.5 352.3 L579.8 356.3M568.5 350.9 L570.5 348.6M564.5 357.8 L564.5 361.2" stroke="#0458b8" stroke-width="2.4" fill="none" stroke-linecap="round"/>
<path d="M333.1 183.4 L334.6 190.8M334.6 190.8 L339.0 197.5M339.0 197.5 L340.3 202.4M340.3 202.4 L344.5 207.7M344.5 207.7 L348.4 215.8M319.2 198.4 L323.5 195.7M323.5 195.7 L329.5 192.6M329.5 192.6 L335.7 189.5M335.7 189.5 L341.7 187.0M341.7 187.0 L347.3 182.5M334.9 203.3 L338.2 206.0M331.1 193.5 L333.7 195.7M354.1 197.9 L358.4 200.8M358.4 200.8 L364.8 204.8M364.8 204.8 L369.6 208.5M369.6 208.5 L375.9 213.2M375.9 213.2 L383.4 214.2M354.1 197.9 L361.9 198.9M367.6 197.9 L373.7 196.7M372.2 215.2 L374.6 217.3M364.9 204.8 L369.7 204.8M364.0 203.0 L366.0 204.7M375.5 187.6 L375.5 191.1M416.9 183.4 L416.6 189.2M416.6 189.2 L416.7 196.4M416.7 196.4 L418.4 203.2M418.4 203.2 L416.1 207.8M389.0 183.4 L395.0 182.8M395.0 182.8 L403.1 183.8M408.8 184.5 L417.4 184.2M389.0 183.4 L394.1 189.4M394.1 189.4 L397.1 192.3M397.1 192.3 L400.9 196.9M400.9 196.9 L406.4 201.6M406.4 201.6 L409.2 205.1M409.2 205.1 L413.0 212.2M413.0 212.2 L415.6 214.6M415.7 202.7 L417.8 204.5M412.7 215.2 L415.5 217.6M397.7 188.1 L400.6 184.8M402.4 205.6 L405.4 205.6M423.9 183.4 L431.6 182.8M431.6 182.8 L436.6 184.5M436.6 184.5 L446.0 183.0M446.0 183.0 L451.9 183.5M428.2 211.7 L431.0 205.5M431.0 205.5 L436.8 200.8M440.5 198.6 L443.7 191.7M447.3 188.9 L451.3 184.9M423.9 183.4 L422.7 189.8M422.7 189.8 L423.8 197.7M423.8 197.7 L422.4 203.9M422.4 203.9 L424.3 210.1M424.3 210.1 L423.6 216.1M436.0 203.8 L440.5 203.8M451.0 196.1 L454.3 198.9M426.3 188.5 L426.3 191.1M458.8 200.0 L465.4 198.1M465.4 198.1 L469.5 193.5M469.5 193.5 L474.1 191.5M474.1 191.5 L481.2 188.1M481.2 188.1 L487.8 184.4M458.8 183.4 L465.0 182.8M465.0 182.8 L473.0 182.7M473.0 182.7 L478.6 184.7M472.7 183.4 L472.5 191.1M472.5 191.1 L472.8 196.3M472.8 196.3 L472.6 201.7M472.6 201.7 L473.6 208.1M473.6 208.1 L473.4 215.6M480.7 186.8 L483.8 186.8M466.5 208.2 L469.5 210.7M480.0 212.6 L482.5 214.8M486.0 202.8 L486.0 207.1M471.4 200.5 L474.3 202.9M493.7 215.4 L499.6 214.3M499.6 214.3 L506.4 214.7M515.1 216.3 L520.6 216.1M496.6 212.0 L500.8 207.7M505.6 203.2 L508.6 197.0M508.6 197.0 L513.1 191.7M513.1 191.7 L518.3 186.6M518.3 186.6 L521.4 182.0M493.7 197.9 L501.0 198.0M509.1 198.8 L513.4 197.2M513.4 197.2 L522.4 197.2M500.9 191.5 L505.9 197.8M505.9 197.8 L508.3 202.3M508.3 202.3 L512.3 207.6M518.5 209.6 L520.3 216.5M521.4 196.8 L524.2 193.8M494.9 206.2 L499.8 206.2M501.0 189.2 L503.7 186.2M508.5 190.0 L511.4 192.4M528.6 183.4 L527.1 190.5M527.7 196.2 L527.4 203.6M527.4 203.6 L528.6 210.1M528.6 215.4 L535.1 216.4M535.1 216.4 L543.0 215.2M543.0 215.2 L548.2 214.3M548.2 214.3 L557.2 214.7M532.9 202.1 L540.3 204.0M540.3 204.0 L544.7 208.2M550.8 211.2 L557.9 215.6M534.7 189.3 L537.0 186.7M541.8 199.5 L541.8 202.7M550.3 186.4 L553.1 186.4M545.0 196.1 L547.2 193.6M563.5 215.4 L568.3 211.5M568.3 211.5 L570.8 206.7M570.8 206.7 L576.4 202.4M576.4 202.4 L579.2 197.8M579.2 197.8 L584.7 193.4M584.7 193.4 L588.4 186.6M563.5 183.4 L570.9 182.2M570.9 182.2 L577.9 184.8M577.9 184.8 L584.3 182.1M584.3 182.1 L591.5 182.7M577.3 188.6 L578.6 195.0M578.5 208.3 L576.6 215.9M581.3 188.6 L582.4 194.9M582.4 194.9 L584.9 202.9M584.9 202.9 L589.1 209.6M589.1 209.6 L590.3 215.4M582.8 205.1 L585.7 201.9M571.5 198.4 L576.4 198.4M626.3 183.4 L625.7 188.6M625.7 188.6 L627.8 197.7M627.8 197.7 L627.5 203.9M627.5 203.9 L625.1 209.8M625.1 209.8 L625.9 215.8M598.4 183.4 L601.7 186.9M601.7 186.9 L606.4 193.7M606.4 193.7 L609.3 198.5M609.3 198.5 L614.1 202.4M614.1 202.4 L618.0 205.2M618.0 205.2 L621.8 210.4M621.8 210.4 L627.6 214.5M598.4 183.4 L599.1 189.1M599.1 189.1 L598.1 197.4M599.7 203.4 L597.7 207.7M612.7 189.5 L615.6 186.2M610.3 184.4 L614.0 187.5M624.6 201.0 L627.3 201.0M618.8 197.9 L618.8 202.0M606.4 185.0 L606.4 187.9M633.3 215.4 L640.0 214.7M640.0 214.7 L647.8 214.3M653.0 215.5 L661.4 215.3M633.3 198.9 L639.7 202.0M639.7 202.0 L643.7 204.6M654.7 210.7 L660.8 216.2M633.3 198.9 L638.2 196.6M638.2 196.6 L644.7 192.3M650.1 190.5 L654.4 187.7M654.4 187.7 L661.6 183.2M636.9 197.1 L640.6 200.2M647.0 185.8 L650.7 189.0M403.2 274.9 L409.0 276.4M424.8 273.7 L429.0 273.8M408.6 260.1 L417.2 259.5M417.2 259.5 L424.4 258.2M424.4 258.2 L431.8 258.5M403.5 269.7 L405.9 271.8M411.8 288.0 L411.8 291.7M437.4 259.4 L438.1 265.7M438.1 265.7 L437.4 273.6M436.7 280.4 L436.6 285.3M436.6 285.3 L437.2 294.0M451.1 259.4 L454.2 265.8M454.2 265.8 L454.7 272.2M454.7 272.2 L458.8 275.6M460.9 281.5 L462.4 286.8M462.6 261.3 L467.5 261.3M441.3 261.2 L444.3 261.2M449.7 283.7 L452.6 280.4M473.0 289.1 L474.8 282.6M474.8 282.6 L478.1 275.9M478.1 275.9 L479.3 270.1M471.7 279.4 L479.5 279.2M472.8 260.6 L477.3 260.6M473.4 266.1 L478.1 266.1M480.9 268.7 L484.1 268.7M491.2 270.2 L493.4 267.8M491.4 279.7 L493.9 279.7M512.3 279.8 L515.7 282.3M515.7 282.3 L523.6 285.4M526.7 288.9 L533.1 294.3M505.9 259.4 L509.9 264.0M509.9 264.0 L513.5 269.6M513.5 269.6 L517.8 273.0M517.8 273.0 L520.3 277.6M524.5 283.5 L530.7 287.6M530.7 287.6 L533.1 294.6M522.0 265.9 L525.0 270.2M525.0 270.2 L525.7 275.7M525.7 275.7 L528.5 281.2M528.5 281.2 L530.3 289.0M530.3 289.0 L531.9 292.7M523.7 262.9 L527.5 266.1M508.7 275.6 L508.7 280.2M530.9 260.8 L532.9 258.5M375.9 333.4 L376.0 339.2M376.0 339.2 L376.7 347.4M376.7 347.4 L376.3 354.3M376.3 354.3 L374.5 360.0M377.2 345.2 L382.0 343.9M382.0 343.9 L387.4 342.8M388.6 339.9 L389.1 345.9M389.1 345.9 L389.1 353.4M389.1 353.4 L390.1 361.0M369.3 345.5 L373.6 340.6M373.6 340.6 L375.6 334.8M374.0 355.6 L377.0 358.1M372.5 354.3 L372.5 356.9M377.2 350.7 L379.3 352.5M395.6 347.7 L400.9 350.2M400.9 350.2 L409.6 352.9M409.6 352.9 L415.6 358.7M399.8 354.6 L403.8 352.7M411.7 342.2 L417.8 337.0M417.8 337.0 L420.8 333.5M400.9 332.7 L409.5 332.1M415.5 332.1 L419.9 333.7M412.1 341.8 L412.1 345.3M412.4 345.5 L414.6 347.4M395.7 360.1 L398.1 362.1M415.0 354.5 L418.6 357.5M453.1 339.8 L453.5 347.4M453.5 347.4 L452.4 355.0M435.6 352.2 L439.3 353.3M439.3 353.3 L447.7 356.4M435.3 334.0 L439.9 334.4M439.9 334.4 L446.4 332.9M446.4 332.9 L454.7 333.3M433.4 340.5 L433.4 343.8M429.0 338.4 L429.0 342.5M435.1 342.3 L437.4 344.2M448.0 336.6 L452.1 336.6M437.2 357.0 L440.3 357.0M460.5 347.2 L466.5 350.1M466.5 350.1 L472.7 352.6M472.7 352.6 L479.9 358.5M464.8 355.0 L467.5 347.7M467.5 347.7 L469.4 340.6M469.4 340.6 L472.8 332.1M460.5 360.4 L467.2 359.1M467.2 359.1 L473.4 359.9M473.4 359.9 L479.7 360.2M463.9 358.7 L463.9 363.0M472.0 335.2 L472.0 339.8M480.4 344.3 L483.7 340.6M492.9 360.4 L496.4 353.8M496.4 353.8 L498.3 345.5M498.3 345.5 L501.0 339.3M501.0 339.3 L506.9 332.3M505.6 333.4 L506.1 339.3M506.1 339.3 L505.7 347.4M505.7 347.4 L505.4 354.0M492.9 344.3 L499.9 341.5M505.3 338.7 L510.7 336.6M510.7 336.6 L519.8 332.7M496.0 339.1 L502.7 341.7M502.7 341.7 L506.0 347.5M506.0 347.5 L511.1 352.9M511.1 352.9 L515.4 357.1M516.9 353.6 L518.9 351.4M502.8 349.7 L506.5 352.7M509.0 352.2 L511.8 354.5M526.7 339.4 L526.2 346.6M526.2 346.6 L525.5 352.7M525.5 352.7 L524.2 360.8M538.1 333.4 L542.7 340.8M542.7 340.8 L543.3 347.4M547.7 353.9 L549.8 355.6M530.6 336.5 L535.4 336.5M582.0 339.0 L582.3 346.4M582.3 346.4 L581.8 353.0M581.8 353.0 L583.8 360.1M564.2 346.2 L568.3 341.6M568.3 341.6 L572.8 340.7M572.8 340.7 L578.7 336.8M557.8 360.4 L563.1 359.0M563.1 359.0 L571.3 361.9M576.8 360.4 L582.3 360.4M563.0 337.2 L565.6 341.6M565.6 341.6 L570.5 345.8M570.5 345.8 L573.5 352.3M573.5 352.3 L579.8 356.3M568.5 350.9 L570.5 348.6M564.5 357.8 L564.5 361.2" stroke="#0479f4" stroke-width="1.5" fill="none" stroke-linecap="round"/>
</g>
<circle cx="252.00" cy="266.05" r="29.10" fill="#033c80"/>
<circle cx="252.00" cy="266.05" r="28.65" fill="#0560c6"/>
<circle cx="252.00" cy="266.05" r="28.20" fill="#0479f4"/>
<circle cx="252.00" cy="266.05" r="26.40" fill="#0560c6"/>
<circle cx="252.00" cy="266.05" r="25.95" fill="#033c80"/>
<circle cx="252.00" cy="266.05" r="25.50" fill="#033c80"/>
<circle cx="252.00" cy="266.05" r="25.05" fill="#0560c6"/>
<circle cx="252.00" cy="266.05" r="24.60" fill="#0479f4"/>
<circle cx="252.00" cy="266.05" r="22.80" fill="#0560c6"/>
<circle cx="252.00" cy="266.05" r="22.35" fill="#033c80"/>
<circle cx="252.00" cy="266.05" r="21.90" fill="#033c80"/>
<circle cx="252.00" cy="266.05" r="21.45" fill="#0560c6"/>
<circle cx="252.00" cy="266.05" r="21.00" fill="#0479f4"/>
<circle cx="252.00" cy="266.05" r="19.20" fill="#0560c6"/>
<circle cx="252.00" cy="266.05" r="18.75" fill="#033c80"/>
</g>
</g>
<defs><linearGradient id="cyl" x1="1" y1="0" x2="0" y2="1"><stop offset="0" stop-color="#676767"/><stop offset="1" stop-color="#5a5a5a"/></linearGradient><linearGradient id="cyls" x1="0" y1="0" x2="1" y2="0"><stop offset="0" stop-color="#3a3a3a"/><stop offset="1" stop-color="#494949"/></linearGradient></defs>
<path d="M589.6 352.5 L587 358 A19 19 0 0 0 620 374 L622.5 368.5 Z" fill="url(#cyls)"/>
<circle cx="606" cy="360.1" r="19" fill="url(#cyls)"/>
<circle cx="608.5" cy="354.8" r="19" fill="url(#cyl)"/>
</g>
</svg>


<div style="position:absolute;left:50.1px;top:7.7px;width:17.7px;height:15.9px;background:#1f6fc4;box-shadow:inset 0 0 0 0.6px #2a64a8"></div>
<div style="position:absolute;left:58.6px;top:7.7px;width:1px;height:15.9px;background:rgba(0,0,0,0.08)"></div>





<div style="position:absolute;left:26.7px;top:0;width:1px;height:508px;background:#d9e2e8"></div>
<div style="position:absolute;left:27.7px;top:0;width:1px;height:508px;background:#f9f9f9"></div>
<div style="position:absolute;left:-2px;top:9.3px;width:18.8px;height:69.6px;background:#fff;border:1px solid #e3e7ec;border-top-color:#d2d6dc;box-sizing:border-box"></div>
<div class="gb" style="left:-5px;top:89.0px;width:21.2px;height:82.8px"></div>
<div class="gb" style="left:-5px;top:184.0px;width:21.2px;height:63.5px"></div>

<div style="position:absolute;left:-3px;top:146px;width:10px;height:16.3px;border:1px solid #7c7c7c;box-sizing:border-box;background:linear-gradient(#f2f2f2,#ebebeb 45%,#dddddd 50%,#cfcfcf)"></div>
<div style="position:absolute;left:-1.5px;top:153px;width:0;height:0;border-left:2.5px solid transparent;border-right:2.5px solid transparent;border-top:3px solid #000"></div>
<div class="gb" style="left:41.2px;top:466.2px;width:840px;height:60px;border-radius:2px"></div>
<div class="gb" style="left:52px;top:482.4px;width:141.8px;height:40px"></div>
<div class="gb" style="left:204.8px;top:482.4px;width:182px;height:40px"></div>
<div class="gb" style="left:398.8px;top:482.4px;width:490px;height:40px"></div>
<div style="position:absolute;left:56.1px;top:480.3px;width:47.0px;height:4px;background:#f0f0f0"></div>
<div style="position:absolute;left:208.5px;top:480.3px;width:116.0px;height:4px;background:#f0f0f0"></div>
<div style="position:absolute;left:402.6px;top:480.3px;width:143.0px;height:4px;background:#f0f0f0"></div>
<div style="position:absolute;left:62px;top:499px;width:121.5px;height:20px;border:1px solid #808080;border-radius:2px;box-sizing:border-box;background:linear-gradient(#f4f4f4,#ececec)"></div>
<svg style="position:absolute;left:86px;top:503px" width="16" height="6" viewBox="0 0 16 6"><path d="M1 0.7 L9 5.5 V6 H1 Z M10 0.7 H13.5 V6 H10 Z" fill="#000"/></svg>


<div style="position:absolute;left:274px;top:498.6px;width:103.6px;height:20px;border:1px solid #808080;border-radius:2px;box-sizing:border-box;background:linear-gradient(#f4f4f4,#ececec)"></div>

<div style="position:absolute;left:366.2px;top:505px;width:0;height:0;border-left:3.5px solid transparent;border-right:3.5px solid transparent;border-top:4px solid #000"></div>

<div style="position:absolute;left:440px;top:505px;width:408px;height:4px;background:#e9eaea;border-top:1px solid #bcbcbc;box-sizing:border-box"></div>
<div style="position:absolute;left:433.3px;top:499px;width:8.3px;height:16px;border:1px solid #8a8a8a;border-radius:2px;box-sizing:border-box;background:#f6f6f6"></div>
<div style="position:absolute;left:862.5px;top:499px;width:20px;height:18px;border:1px solid #c5c9cf;box-sizing:border-box;background:#fff"></div>

</div>
<div id="labels" style="position:absolute;left:0;top:0;width:870px;height:508px;overflow:hidden;filter:url(#soft2)">
<div class="t" style="left:49.60px;top:-6.97px;color:#101010;"><span class="s" style="transform:scale(0.4472,0.4900)">Номер сопла</span></div>
<div class="t" style="left:396.60px;top:-6.97px;color:#101010;"><span class="s" style="transform:scale(0.4744,0.4900)">Режим предварительного просмотра</span></div>
<div class="t" style="left:71.60px;top:10.94px;color:#101010;"><span class="s" style="transform:scale(0.4609,0.4950)">Tool 0</span></div>
<div class="t" style="left:49.80px;top:396.03px;color:#101010;"><span class="s" style="transform:scale(0.4632,0.4900)">Положение сопла</span></div>
<div class="t" style="left:49.80px;top:411.73px;color:#101010;"><span class="s" style="transform:scale(0.4693,0.4900)">X: 123.586</span></div>
<div class="t" style="left:49.80px;top:427.23px;color:#101010;"><span class="s" style="transform:scale(0.4756,0.4900)">Y: 99.129</span></div>
<div class="t" style="left:49.80px;top:442.83px;color:#101010;"><span class="s" style="transform:scale(0.4783,0.4900)">Z: 2.380</span></div>
<div class="t" style="left:-4.20px;top:108.91px;color:#000;"><span class="s" style="transform:scale(0.4800,0.4800)">я</span></div>
<div class="t" style="left:58.60px;top:476.61px;color:#000;"><span class="s" style="transform:scale(0.4473,0.4800)">Анимация</span></div>
<div class="t" style="left:211.00px;top:476.61px;color:#000;"><span class="s" style="transform:scale(0.4740,0.4800)">Параметры отображения</span></div>
<div class="t" style="left:405.10px;top:476.61px;color:#000;"><span class="s" style="transform:scale(0.4714,0.4800)">Диапазон отображаемых слоёв</span></div>
<div class="t" style="left:104.00px;top:504.31px;color:#000;"><span class="s" style="transform:scale(0.4328,0.4800)">Запуск/пауза</span></div>
<div class="t" style="left:214.50px;top:502.31px;color:#000;"><span class="s" style="transform:scale(0.4663,0.4800)">Показывать</span></div>
<div class="t" style="left:277.20px;top:502.31px;color:#000;"><span class="s" style="transform:scale(0.4548,0.4800)">Слои целиком</span></div>
<div class="t" style="left:407.60px;top:503.31px;color:#000;"><span class="s" style="transform:scale(0.4774,0.4800)">От</span></div>
<div class="t" style="left:865.50px;top:503.81px;color:#000;"><span class="s" style="transform:scale(0.4800,0.4800)">1</span></div>
</div>
</body></html>
